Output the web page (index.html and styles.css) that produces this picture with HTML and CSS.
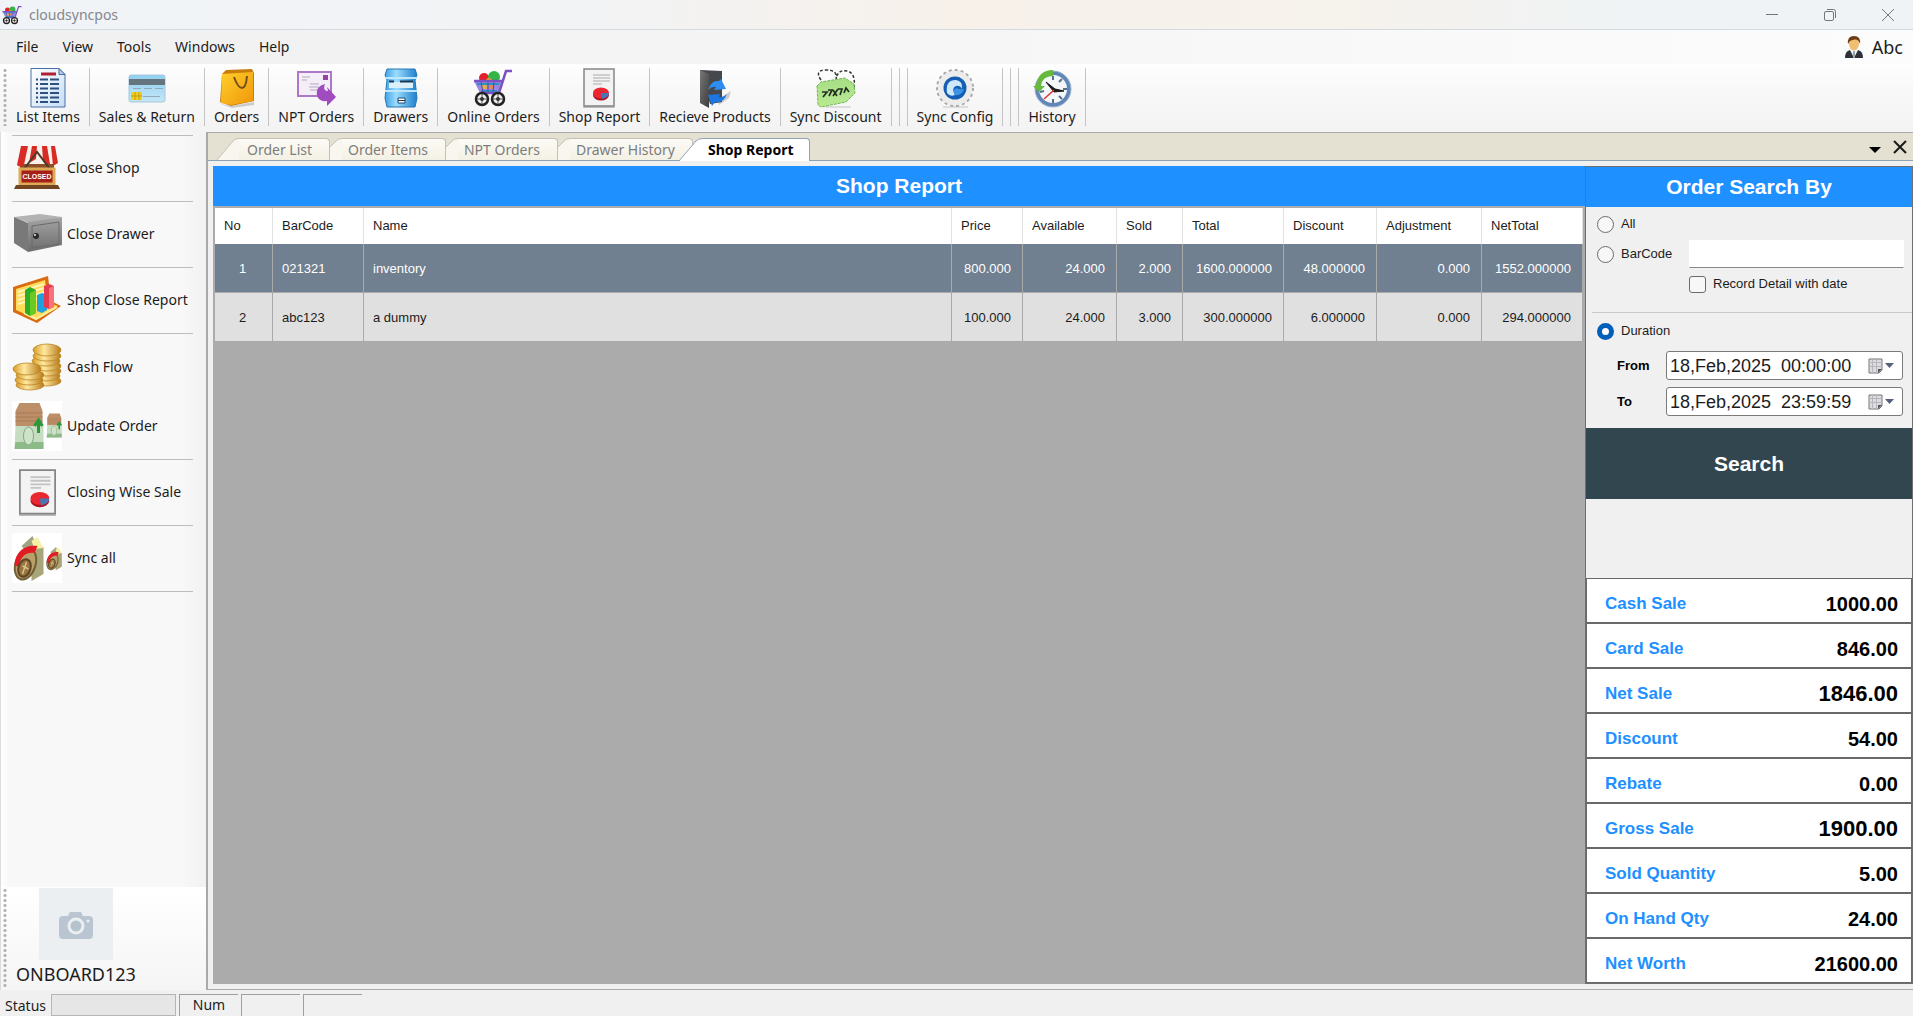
FILE: index.html
```html
<!DOCTYPE html>
<html lang="en">
<head>
<meta charset="utf-8">
<title>cloudsyncpos</title>
<link rel="stylesheet" href="styles.css">
</head>
<body>
<svg class="defs" aria-hidden="true">
  <defs>
    <linearGradient id="paper" x1="0" y1="0" x2="1" y2="1"><stop offset="0" stop-color="#fff"/><stop offset="1" stop-color="#c5ddf8"/></linearGradient>
    <linearGradient id="card" x1="0" y1="0" x2="0" y2="1"><stop offset="0" stop-color="#8fd0f2"/><stop offset="1" stop-color="#c4e6f6"/></linearGradient>
    <linearGradient id="bag" x1="0" y1="0" x2="1" y2="1"><stop offset="0" stop-color="#ffd02b"/><stop offset="1" stop-color="#f0960a"/></linearGradient>
    <linearGradient id="blue" x1="0" y1="0" x2="1" y2="0"><stop offset="0" stop-color="#3fa2e4"/><stop offset=".35" stop-color="#9bdcff"/><stop offset="1" stop-color="#1f7fca"/></linearGradient>
    <linearGradient id="safe" x1="0" y1="0" x2="0" y2="1"><stop offset="0" stop-color="#a5a5a5"/><stop offset="1" stop-color="#6c6c6c"/></linearGradient>
    <linearGradient id="gold" x1="0" y1="0" x2="1" y2="0"><stop offset="0" stop-color="#d79a24"/><stop offset=".4" stop-color="#ffe9a0"/><stop offset="1" stop-color="#b97a18"/></linearGradient>
    <linearGradient id="dark" x1="0" y1="0" x2="1" y2="1"><stop offset="0" stop-color="#777"/><stop offset="1" stop-color="#3c3c3c"/></linearGradient>
    <linearGradient id="tag" x1="0" y1="0" x2="0" y2="1"><stop offset="0" stop-color="#a6de85"/><stop offset="1" stop-color="#b9ea92"/></linearGradient>
    <symbol id="cart" viewBox="0 0 40 40">
      <circle cx="11" cy="10" r="5" fill="#e5202b"/><circle cx="21" cy="9" r="6" fill="#35b548"/><circle cx="16" cy="13" r="3" fill="#f2a02b"/>
      <path d="M1 13h28l-4 12H7z" fill="#9a86e0"/><path d="M4 16h22M8 23h16" stroke="#2a93c4" stroke-width="2"/><path d="M9 17h5v4H9z" fill="#d9b04a"/><path d="M16 17h4v4h-4z" fill="#e08a5a"/><path d="M8 14l2 10M15 14v10M21 14l-1 10" stroke="#5a3fa8"/>
      <path d="M39 3h-6l-7 22H8M1 13h28" fill="none" stroke="#7a52c4" stroke-width="2.500"/>
      <g fill="#f0f0f0" stroke="#222" stroke-width="2.500"><circle cx="9" cy="31" r="6"/><circle cx="25" cy="31" r="6"/></g>
      <path d="M9 26v10M4 31h10M25 26v10M20 31h10" stroke="#555"/><circle cx="9" cy="31" r="2" fill="#333"/><circle cx="25" cy="31" r="2" fill="#333"/>
    </symbol>
    <symbol id="report" viewBox="0 0 40 40">
      <path d="M5 38h30l1 2H4z" fill="#bbb"/><path d="M5 1h30v37H5z" fill="#f3f3f3" stroke="#858585" stroke-width="1.5"/>
      <path d="M14 7h17M14 10h17M14 13h17M14 16h9" stroke="#c3c3c3" stroke-width="1.5"/>
      <ellipse cx="22" cy="27" rx="8" ry="5.5" fill="#ac1420"/><ellipse cx="22" cy="25" rx="8" ry="5.5" fill="#ea2730"/><path d="M22 25h8c0 3-3 5-7 6z" fill="#4a74b8"/>
    </symbol>
    <symbol id="crate" viewBox="0 0 30 48">
      <path d="M6 1h20l3 8v15H2V9z" fill="#bd8f68"/><path d="M2 11h27M2 15h27M2 19h27" stroke="#a87a56"/><path d="M2 24h28v23H1z" fill="#c6ddc1"/><path d="M2 40h28v7H1z" fill="#8dbb88"/>
      <ellipse cx="15" cy="34" rx="5" ry="9" fill="#cfe3c9" stroke="#84a982"/><path d="M25 31V20m-4 4l4-6 4 6" fill="none" stroke="#289a3c" stroke-width="3"/>
    </symbol>
    <symbol id="roll" viewBox="0 0 30 48">
      <path d="M18 14l12-1v27l-12 7z" fill="#a8a578"/><path d="M8 12L19 2l5 12-12 3z" fill="#a1a381"/><path d="M18 7l6-4 6 11-9 1z" fill="#f5f2a4"/>
      <ellipse cx="12" cy="30" rx="10" ry="16" transform="rotate(18 12 30)" fill="#b8a06a" stroke="#745e36" stroke-width="2"/>
      <path d="M1 31C2 18 11 10 24 12l-3 7C13 18 7 22 5 33z" fill="#e21b25"/>
      <ellipse cx="11" cy="34" rx="6" ry="9" transform="rotate(18 11 34)" fill="#98743e" stroke="#5b4526" stroke-width="2"/><path d="M13 28l-4 12M9 32l6 3" stroke="#d9c48c" stroke-width="1.5"/>
    </symbol>
  </defs>
</svg>

<header class="titlebar">
  <svg class="app-icon"><use href="#cart"/></svg>
  <h1 class="app-name">cloudsyncpos</h1>
  <div class="window-buttons">
    <button type="button" aria-label="Minimize"><svg viewBox="0 0 12 12"><path d="M0 5.500h12"/></svg></button>
    <button type="button" aria-label="Restore"><svg viewBox="0 0 12 12"><rect x=".5" y="2.500" width="9" height="9" rx="1.500"/><path d="M3 .5h6.500q2 0 2 2V9"/></svg></button>
    <button type="button" aria-label="Close window"><svg viewBox="0 0 12 12"><path d="M0 0l12 12M12 0L0 12"/></svg></button>
  </div>
</header>

<nav class="menubar" aria-label="Menu">
  <button type="button">File</button>
  <button type="button">View</button>
  <button type="button">Tools</button>
  <button type="button">Windows</button>
  <button type="button">Help</button>
  <span class="user">
    <svg viewBox="0 0 18 24"><path d="M0 23q0-7 5-8h8q5 1 5 8z" fill="#2d3138"/><path d="M5 15l4 8 4-8-4-2z" fill="#f3f5f7"/><path d="M8 16h2v7H8z" fill="#9aa3ad"/><ellipse cx="9" cy="9" rx="5" ry="6.500" fill="#f1bd70"/><path d="M3 9Q2 1 9 1t6 8q-1-4-4-4.500T5 6z" fill="#6d3c14"/></svg>
    Abc
  </span>
</nav>

<div class="toolbar" role="toolbar" aria-label="Main">
  <span class="grip"></span>
  <button type="button"><svg viewBox="0 0 40 40"><path d="M3 .5h28l6 6V39H3z" fill="url(#paper)" stroke="#4a6ea5"/><path d="M31 .5v6h6z" fill="#b8cbe6" stroke="#4a6ea5"/><path d="M13 6h15" stroke="#b01f32" stroke-width="3"/><path d="M8 11.500h2M12 11.500h8M22 11.500h9M8 16h2M12 16h8M22 16h9M8 20.500h2M12 20.500h8M22 20.500h9M8 25h2M12 25h8M22 25h9M8 29.500h2M12 29.500h8M22 29.500h9M8 34h2M12 34h8M22 34h9" stroke="#2d4f7e" stroke-width="2"/></svg>List Items</button>
  <button type="button"><svg viewBox="0 0 40 40"><rect x="2" y="7" width="36" height="27" rx="2" fill="url(#card)" stroke="#a5c8da"/><path d="M2 11h36v6H2z" fill="#66747d"/><path d="M6 20.500h8M17 20.500h8M28 20.500h8M16 28.500h17" stroke="#92aab7"/><rect x="4" y="24" width="11" height="8" fill="#f0cf25"/><path d="M4 28h11M8 24v8M12 24v8" stroke="#c39d12"/></svg>Sales &amp; Return</button>
  <button type="button"><svg viewBox="0 0 40 40"><path d="M1 35l13 3 23-4v3l-22 3z" fill="#ccc"/><path d="M5 6l4-4 26-1 2 4v28l-23 5L3 34z" fill="#c97d0a"/><path d="M5 6l31-2v29l-22 4-10-2z" fill="url(#bag)"/><path d="M17 9q4 11 8 11t5-12" fill="none" stroke="#71501b" stroke-width="2"/></svg>Orders</button>
  <button type="button"><svg viewBox="0 0 40 40"><rect x="2" y="4" width="33" height="24" fill="#f3eef7" stroke="#ad78c8" stroke-width="2"/><path d="M6 9h8M6 12h5M14 16h9M13 19h10M14 22h8" stroke="#b5a9bd"/><rect x="27" y="7" width="5" height="5" fill="#9342a8"/><path d="M29 16c-2 5 0 7 3 7l-1-4 9 10-9 9v-5c-8 1-11-4-10-10 1-4 4-6 8-7z" fill="#a04cc0"/></svg>NPT Orders</button>
  <button type="button"><svg viewBox="0 0 40 40"><path d="M6 1h28l2 6-2 5 2 18-2 9H6l-2-9 2-18-2-5z" fill="url(#blue)" stroke="#2876b5"/><path d="M4 10h32M4 23h32" stroke="#bfe7fc" stroke-width="2"/><path d="M8 14h24v6H8z" fill="#daf1fc"/><path d="M8 13.500h5M19 13.500h13" stroke="#173855" stroke-width="2"/><path d="M17 30h7v5h-7z" fill="#fff" stroke="#175078"/><path d="M17 32.500h7" stroke="#333"/></svg>Drawers</button>
  <button type="button"><svg viewBox="0 0 40 40"><use href="#cart"/></svg>Online Orders</button>
  <button type="button"><svg viewBox="0 0 40 40"><use href="#report"/></svg>Shop Report</button>
  <button type="button"><svg viewBox="0 0 40 40"><path d="M22 32l14-9-2 7-10 7z" fill="#ccc"/><path d="M5 2l22 1v31l-12 2z" fill="#45494d"/><path d="M5 2l9 4v34l-9-5z" fill="url(#dark)"/><path d="M13 22q3-10 11-9l2-2 5 10-12 1 2-3q-4-1-8 3z" fill="#2e8df0"/><path d="M32 26q-4 10-12 8l-3 4-4-11 12-1-1 3q3 1 8-3z" fill="#1d76e2"/></svg>Recieve Products</button>
  <button type="button"><svg viewBox="0 0 40 40"><path d="M5 12Q-2 2 10 2t10 9Q22 1 31 3t7 17" fill="none" stroke="#303a30" stroke-width="1.500" stroke-dasharray="3 2"/><path d="M9 39h26" stroke="#ddd" stroke-width="2"/><path d="M1 18l4-4 24-4 9 6 1 9-9 9-25 5-3-2z" fill="url(#tag)" stroke="#78b459" stroke-dasharray="3 1"/><g fill="none" stroke="#253022" stroke-width="1.700"><path d="M6 24h5l-4 5M12 22h4l-3 6M17 28l5-7M17 22l4 6M22 21h4l-2 6M28 25l2-5 3 4"/></g></svg>Sync Discount</button>
  <span class="divider"></span>
  <span class="divider"></span>
  <button type="button"><svg viewBox="0 0 40 40"><path d="M8 39h25" stroke="#ddd" stroke-width="2"/><circle cx="20" cy="20" r="18" fill="#eee" stroke="#a8a8a8" stroke-width="2" stroke-dasharray="3 3"/><circle cx="20" cy="20" r="17" fill="#ececec"/><circle cx="20" cy="20" r="11.500" fill="#145eb4"/><path d="M12 25Q10 12 21 12q7 1 6 9-2-4-6-3-5 2-1 9-5 2-8-2z" fill="#cfe7fb"/><path d="M20 27q7 1 9-6-4 1-8-1-4 3-1 7z" fill="#3d92e4"/></svg>Sync Config</button>
  <span class="divider"></span>
  <span class="divider"></span>
  <button type="button"><svg viewBox="0 0 40 40"><circle cx="21" cy="21" r="16" fill="#f4f7fa" stroke="#6286b5" stroke-width="4"/><circle cx="21" cy="21" r="18" fill="none" stroke="#9cb6d6"/><path d="M21 2Q6 2 4 18H1l6 6 6-6h-4Q10 8 21 8z" fill="#67b93d"/><path d="M21 8v4M21 31v4M8 24l4-1M31 21h4M30 11l-3 3M30 31l-3-3" stroke="#57718f" stroke-width="2"/><path d="M14 14l9 7 9 2-10 1z" fill="#181818" stroke="#181818"/><path d="M22 22L12 31" stroke="#db3434" stroke-width="1.500"/></svg>History</button>
</div>

<div class="workspace">
  <aside class="sidebar">
    <ul class="side-list">
      <li><button type="button"><svg viewBox="0 0 50 50"><path d="M8 17h34v22H8z" fill="#8b4f2b"/><path d="M12 3h28l6 18H4z" fill="#f7f1ea"/><path d="M9 3h7l-4 19q-4 3-7 0zM20 3h5l-1 13-7 4zM30 3h5l3 18q-5 1-7-3zM39 3h4l3 17-5 3z" fill="#d82b25"/><path d="M12 26L25 9l13 17" fill="none" stroke="#4c392a" stroke-width="2"/><path d="M8 26h34v15H8z" fill="#a71f19" stroke="#dfaa55" stroke-width="3"/><path d="M4 42h42l2 4H2z" fill="#714521"/><text class="closed-sign" x="25" y="36" text-anchor="middle">CLOSED</text></svg>Close Shop</button></li>
      <li><button type="button"><svg viewBox="0 0 50 50"><path d="M2 8l26-3 22 3-33 6z" fill="#b3b3b3"/><path d="M2 8l14 6v29L2 34z" fill="#797979"/><path d="M16 13l34-5v28l-34 7z" fill="url(#safe)"/><path d="M20 17l27-4v22l-27 4z" fill="none" stroke="#6a6a6a"/><circle cx="24" cy="27" r="3" fill="#292929"/><circle cx="23" cy="26" r="1" fill="#eee"/></svg>Close Drawer</button></li>
      <li><button type="button"><svg viewBox="0 0 50 50"><path d="M1 12L36 1l3 25 10 5-24 17L1 37z" fill="#db6b12"/><path d="M4 14l29-9 3 23 10 3-22 13L4 35z" fill="#ffdb5c"/><path d="M6 17l26-8M6 21l26-8M6 25l27-8M6 29l28-8" stroke="#fff4b9" stroke-width="2"/><path d="M12 38l12 6 21-12" fill="none" stroke="#fff2a0" stroke-width="2"/><path d="M13 15l5-3 6 3v23l-6 3-5-3z" fill="#2dac25"/><path d="M18 18l6-3v23l-6 3z" fill="#69ca22"/><path d="M25 20l5-2 5 2v15l-5 3-5-2z" fill="#20a1df"/><path d="M32 11l5-2 5 2v21l-5 2-5-2z" fill="#e33b52"/><path d="M37 13l5-2v21l-5 2z" fill="#f8717b"/></svg>Shop Close Report</button></li>
      <li class="joined"><button type="button"><svg viewBox="0 0 50 50"><g fill="url(#gold)" stroke="#b98526" stroke-width=".8"><ellipse cx="35" cy="39" rx="14" ry="5"/><ellipse cx="34" cy="34" rx="14" ry="5"/><ellipse cx="35" cy="29" rx="14" ry="5"/><ellipse cx="35" cy="24" rx="14" ry="5"/><ellipse cx="34" cy="19" rx="14" ry="5"/><ellipse cx="35" cy="14" rx="14" ry="5"/><ellipse cx="35" cy="8" rx="14" ry="6"/><ellipse cx="18" cy="43" rx="14" ry="5"/><ellipse cx="17" cy="38" rx="14" ry="5"/><ellipse cx="18" cy="33" rx="14" ry="5"/><ellipse cx="15" cy="27" rx="14" ry="6"/></g></svg>Cash Flow</button></li>
      <li><button type="button"><svg viewBox="0 0 50 50"><path d="M0 0h50v50H0z" fill="#fff"/><use href="#crate" x="1" y="1" width="31" height="48"/><use href="#crate" x="34" y="12" width="16" height="25"/></svg>Update Order</button></li>
      <li><button type="button"><svg viewBox="0 0 50 50"><use href="#report" x="2" y="2" width="47" height="47"/></svg>Closing Wise Sale</button></li>
      <li><button type="button"><svg viewBox="0 0 50 50"><path d="M0 0h50v50H0z" fill="#fff"/><use href="#roll" x="1" y="1" width="31" height="48"/><use href="#roll" x="34" y="13" width="16" height="25"/></svg>Sync all</button></li>
    </ul>
    <div class="terminal">
      <span class="grip"></span>
      <figure>
        <svg viewBox="0 0 74 72"><path d="M0 0h74v72H0z" fill="#ebeff2"/><path d="M24 28h5l2-4h11l2 4h6q4 0 4 4v15q0 4-4 4H24q-4 0-4-4V32q0-4 4-4z" fill="#b9c6d1"/><circle cx="37" cy="38" r="7" fill="#b4c3ce" stroke="#ebeff2" stroke-width="3"/><circle cx="49" cy="33" r="1.500" fill="#ebeff2"/></svg>
        <figcaption>ONBOARD123</figcaption>
      </figure>
    </div>
  </aside>

  <main class="documents">
    <div class="tabstrip" role="tablist">
      <button type="button" role="tab" class="tab first"><svg viewBox="0 0 22 22"><path class="face" d="M0 22L16 3Q18 .5 22 .5V22z"/><path class="edge" d="M0 22L16 3Q18 .5 22 .5"/></svg><span>Order List</span></button>
      <button type="button" role="tab" class="tab"><svg viewBox="0 0 12 22"><path class="face" d="M0 9L6 3Q8 .5 12 .5V22H0z"/><path class="edge" d="M0 9L6 3Q8 .5 12 .5"/></svg><span>Order Items</span></button>
      <button type="button" role="tab" class="tab"><svg viewBox="0 0 12 22"><path class="face" d="M0 9L6 3Q8 .5 12 .5V22H0z"/><path class="edge" d="M0 9L6 3Q8 .5 12 .5"/></svg><span>NPT Orders</span></button>
      <button type="button" role="tab" class="tab"><svg viewBox="0 0 12 22"><path class="face" d="M0 9L6 3Q8 .5 12 .5V22H0z"/><path class="edge" d="M0 9L6 3Q8 .5 12 .5"/></svg><span>Drawer History</span></button>
      <button type="button" role="tab" class="tab active" aria-selected="true"><svg viewBox="0 0 24 23"><path class="face" d="M0 23L17 3Q19 .5 24 .5V23z"/><path class="edge" d="M0 23L17 3Q19 .5 24 .5"/></svg><span>Shop Report</span></button>
      <div class="tab-tools">
        <button type="button" aria-label="Open windows"><svg viewBox="0 0 14 14"><path d="M1 7h12l-6 6z"/></svg></button>
        <button type="button" aria-label="Close tab"><svg viewBox="0 0 14 14"><path class="cross" d="M1 1l12 12M13 1L1 13"/></svg></button>
      </div>
    </div>

    <div class="page">
      <section class="report">
        <h2 class="banner">Shop Report</h2>
        <table class="grid">
          <colgroup><col class="w-no"><col class="w-code"><col><col class="w-price"><col class="w-avail"><col class="w-sold"><col class="w-total"><col class="w-disc"><col class="w-adj"><col class="w-net"></colgroup>
          <thead>
            <tr><th>No</th><th>BarCode</th><th>Name</th><th>Price</th><th>Available</th><th>Sold</th><th>Total</th><th>Discount</th><th>Adjustment</th><th>NetTotal</th></tr>
          </thead>
          <tbody>
            <tr class="selected"><td class="mid">1</td><td>021321</td><td>inventory</td><td class="num">800.000</td><td class="num">24.000</td><td class="num">2.000</td><td class="num">1600.000000</td><td class="num">48.000000</td><td class="num">0.000</td><td class="num">1552.000000</td></tr>
            <tr><td class="mid">2</td><td>abc123</td><td>a dummy</td><td class="num">100.000</td><td class="num">24.000</td><td class="num">3.000</td><td class="num">300.000000</td><td class="num">6.000000</td><td class="num">0.000</td><td class="num">294.000000</td></tr>
          </tbody>
        </table>
      </section>

      <section class="search">
        <h2 class="banner">Order Search By</h2>
        <form class="filters">
          <div class="line"><label class="choice"><input type="radio" name="by">All</label></div>
          <div class="line"><label class="choice code"><input type="radio" name="by">BarCode</label><input class="code-box" type="text" aria-label="BarCode"></div>
          <div class="line indent"><label class="choice"><input type="checkbox">Record Detail with date</label></div>
          <hr>
          <div class="line"><label class="choice"><input type="radio" name="by" checked>Duration</label></div>
          <div class="dates">
            <label for="from">From</label>
            <span class="picker"><input id="from" type="text" value="18,Feb,2025  00:00:00"><svg viewBox="0 0 26 16"><path d="M1 1h13v11l-3 3H1z" fill="#dcdce0" stroke="#77777c"/><path d="M1 4.500h13M1 8.500h13M4.500 1v14M8.500 1v14" stroke="#b6b6bc"/><path d="M14 11h-4v4z" fill="#555"/><path d="M17 5h9l-4.500 5z" fill="#55617a"/></svg></span>
            <label for="to">To</label>
            <span class="picker"><input id="to" type="text" value="18,Feb,2025  23:59:59"><svg viewBox="0 0 26 16"><path d="M1 1h13v11l-3 3H1z" fill="#dcdce0" stroke="#77777c"/><path d="M1 4.500h13M1 8.500h13M4.500 1v14M8.500 1v14" stroke="#b6b6bc"/><path d="M14 11h-4v4z" fill="#555"/><path d="M17 5h9l-4.500 5z" fill="#55617a"/></svg></span>
          </div>
          <button type="button" class="search-button">Search</button>
        </form>
        <dl class="totals">
          <div><dt>Cash Sale</dt><dd>1000.00</dd></div>
          <div><dt>Card Sale</dt><dd>846.00</dd></div>
          <div><dt>Net Sale</dt><dd class="major">1846.00</dd></div>
          <div><dt>Discount</dt><dd>54.00</dd></div>
          <div><dt>Rebate</dt><dd>0.00</dd></div>
          <div><dt>Gross Sale</dt><dd class="major">1900.00</dd></div>
          <div><dt>Sold Quantity</dt><dd>5.00</dd></div>
          <div><dt>On Hand Qty</dt><dd>24.00</dd></div>
          <div><dt>Net Worth</dt><dd>21600.00</dd></div>
        </dl>
      </section>
    </div>
  </main>
</div>

<footer class="statusbar">
  <span class="status-label">Status</span>
  <span class="progress"></span>
  <span class="cell">Num</span>
  <span class="cell"></span>
  <span class="cell"></span>
</footer>
</body>
</html>
```
FILE: styles.css
```css
* { box-sizing: border-box; }

body {
  margin: 0;
  min-height: 100vh;
  display: flex;
  flex-direction: column;
  background: #f0f0f0;
  color: #1c1c1c;
  font: 14px/20px "Noto Sans", "Open Sans", sans-serif;
}

button {
  margin: 0;
  padding: 0;
  border: 0;
  background: none;
  color: inherit;
  font: inherit;
}

svg { display: block; flex: none; }
.defs { position: absolute; width: 0; height: 0; }

/* title bar */
.titlebar {
  display: flex;
  align-items: center;
  height: 30px;
  padding-left: 2px;
  border-bottom: 1px solid #d3dbe1;
  background: linear-gradient(90deg, #f0f3f7, #f2f3f5 30%, #f7f1ea 50%, #f6f2ec 70%, #eff3f5 85%);
}
.app-icon { width: 20px; height: 20px; }
.app-name { margin: 0 0 0 7px; color: #85888b; font-size: 14px; font-weight: 400; }
.window-buttons { display: flex; margin-left: auto; }
.window-buttons button { display: flex; justify-content: center; width: 58px; padding: 8px 0; }
.window-buttons button:last-child { width: 50px; margin-left: 4px; }
.window-buttons svg { width: 12px; height: 12px; fill: none; stroke: #777; }

/* menu */
.menubar {
  display: flex;
  align-items: center;
  gap: 24px;
  height: 34px;
  padding: 0 10px 0 16px;
  background: linear-gradient(90deg, #f0f0f0, #fcfcfc);
}
.user { display: flex; align-items: center; gap: 9px; margin-left: auto; font-size: 18px; }
.user svg { width: 18px; height: 24px; }

/* toolbar */
.toolbar {
  display: flex;
  align-items: stretch;
  height: 68px;
  padding: 4px 0 6px 3px;
  background: linear-gradient(#fefefe, #f8f8f8 40%, #f3f3f3);
}
.grip { width: 4px; background: radial-gradient(circle, #b0b0b0 1px, transparent 2px) 0 0 / 4px 5px; }
.toolbar button {
  display: flex;
  flex-direction: column;
  align-items: center;
  padding: 0 9px;
  border-right: 1px solid #c4c4c4;
  line-height: 18px;
  white-space: nowrap;
}
.toolbar button svg { width: 40px; height: 40px; }
.divider { width: 8px; border-right: 1px solid #c4c4c4; }

/* workspace */
.workspace { flex: 1; display: flex; }
.sidebar {
  display: flex;
  flex-direction: column;
  width: 206px;
  border-left: 1px solid #dcdcdc;
  background: linear-gradient(90deg, #fff, #f8f8f8 8px, #f8f8f8 180px, #f2f2f2);
}
.side-list { margin: 3px 13px 0 11px; padding: 0; border-top: 1px solid #bdbdbd; list-style: none; }
.side-list li { padding: 7px 0 8px; border-bottom: 1px solid #bdbdbd; }
.side-list .joined { padding: 8px 0 2px; border-bottom: 0; }
.side-list button { display: flex; align-items: center; gap: 5px; width: 100%; white-space: nowrap; }
.side-list svg { width: 50px; height: 50px; }
.closed-sign { fill: #fff; font: bold 7px "Liberation Sans", sans-serif; }

.terminal { display: flex; gap: 9px; margin-top: auto; padding: 1px 3px 2px 2px; background: linear-gradient(#fff, #f5f5f5); }
.terminal figure { margin: 0; }
.terminal figure svg { width: 74px; height: 72px; margin-left: 23px; }
.terminal figcaption { font-size: 18px; line-height: 28px; }

/* documents */
.documents {
  flex: 1;
  display: flex;
  flex-direction: column;
  min-width: 0;
  border: 1px solid #a9a9a9;
  border-width: 1px 0 1px 2px;
}
.tabstrip {
  display: flex;
  align-items: flex-end;
  height: 28px;
  padding-left: 9px;
  border-bottom: 1px solid #8fa3b5;
  background: #e4e1d3;
}
.tab { display: flex; height: 22px; color: #7d7d7d; }
.tab svg { width: 12px; height: 22px; }
.tab span { padding: 0 17px 0 6px; border: 1px solid #c3c0b4; border-width: 1px 1px 0 0; border-top-right-radius: 4px; background: linear-gradient(#fcfbf6, #f3f0e4); line-height: 21px; }
.tab .face { fill: #f8f6ee; }
.tab .edge { fill: none; stroke: #c3c0b4; }
.tab.first svg { width: 22px; }
.tab.first span { padding: 0 17px 0 8px; }
.tab.active { height: 23px; margin: 0 0 -1px -14px; color: #000; font-weight: 700; }
.tab.active svg { width: 24px; height: 23px; }
.tab.active span { padding: 0 16px 0 5px; border-color: #8fa3b5; background: #fff; line-height: 22px; }
.tab.active .face { fill: #fff; }
.tab.active .edge { stroke: #8fa3b5; }
.tab-tools { display: flex; gap: 11px; margin-left: auto; padding: 0 6px 6px 0; }
.tab-tools svg { width: 14px; height: 14px; }
.cross { stroke: #1a1a1a; stroke-width: 2; }

.page { flex: 1; display: flex; padding: 5px 0 5px 5px; }
.report { flex: 1; background: #ababab; }
.banner {
  margin: 0;
  background: #1e90ff;
  color: #fff;
  font: bold 21px/40px "Liberation Sans", Arial, sans-serif;
  text-align: center;
}

.grid {
  width: calc(100% - 4px);
  margin: 2px 2px 0;
  border-collapse: separate;
  border-spacing: 0;
  table-layout: fixed;
  font: 13px/16px "Liberation Sans", Arial, sans-serif;
}
.grid th { height: 36px; padding: 0 0 1px 9px; border-right: 1px solid #e2e2e2; background: #fff; font-weight: 400; text-align: left; }
.grid td { height: 49px; padding: 2px 11px 0 9px; border: 1px solid #a9a9a9; border-width: 0 1px 1px 0; background: #e0e0e0; }
.grid .selected td { background: #708090; color: #fff; }
.grid .num { text-align: right; }
.grid .mid { text-align: center; }
.w-no { width: 58px; }
.w-code { width: 91px; }
.w-price { width: 71px; }
.w-avail { width: 94px; }
.w-sold { width: 66px; }
.w-total { width: 101px; }
.w-disc { width: 93px; }
.w-adj { width: 105px; }
.w-net { width: 101px; }

/* search panel */
.search {
  display: flex;
  flex-direction: column;
  width: 328px;
  border: 1px solid #6e6e6e;
  font: 13px/16px "Liberation Sans", Arial, sans-serif;
}
.filters { display: flex; flex-direction: column; gap: 2px; padding-top: 3px; }
.line { display: flex; align-items: center; height: 28px; padding: 0 8px 0 11px; }
.line.indent { padding-left: 103px; }
.choice { display: flex; align-items: center; gap: 7px; white-space: nowrap; }
.choice.code { width: 92px; }
.choice input { appearance: none; width: 17px; height: 17px; margin: 0; border: 1px solid #6b6b6b; background: #f7f7f7; }
.choice input[type="radio"] { border-radius: 50%; }
.choice input[type="checkbox"] { border-radius: 3px; }
.choice input[type="radio"]:checked { border: 5px solid #005fb8; background: #fff; }
.code-box { flex: 1; min-width: 0; height: 28px; border: 1px solid #fff; border-bottom-color: #888; background: #fff; }
.filters hr { width: calc(100% - 6px); margin: 12px 0 2px 6px; border: 0; border-top: 1px solid #c8c8c8; }
.dates { display: grid; grid-template-columns: 49px minmax(0, 1fr); gap: 7px 0; align-items: center; margin: 4px 9px 10px 31px; }
.dates label { color: #000; font-weight: 700; }
.picker { display: flex; align-items: center; height: 29px; padding-right: 8px; border: 1px solid #7a7a7a; border-radius: 3px; background: #fff; }
.picker input { flex: 1; min-width: 0; padding: 0 3px; border: 0; background: none; color: #1c1c1c; font: 18px/24px "Liberation Sans", Arial, sans-serif; }
.picker svg { width: 26px; height: 16px; }
.search-button { height: 71px; background: #32464f; color: #fff; font: bold 21px/24px "Liberation Sans", Arial, sans-serif; }

.totals { margin: auto 0 0; border: 1px solid #696969; border-width: 0 1px; }
.totals div { display: flex; align-items: center; justify-content: space-between; height: 45px; padding: 6px 13px 0 18px; border: 1px solid #696969; border-width: 1px 0; background: #fff; }
.totals dt { color: #1e90ff; font-size: 17px; font-weight: 700; }
.totals dd { margin: 0; color: #000; font-size: 20px; font-weight: 700; }
.totals .major { font-size: 22px; }

/* status bar */
.statusbar { display: flex; align-items: flex-end; gap: 3px; height: 26px; padding-left: 5px; }
.status-label { width: 43px; line-height: 20px; }
.progress { width: 125px; height: 22px; border: 1px solid #b5b5b5; background: #e6e6e6; }
.cell { width: 59px; height: 22px; border: 1px solid #9f9f9f; border-width: 1px 0 0 1px; text-align: center; }
```
